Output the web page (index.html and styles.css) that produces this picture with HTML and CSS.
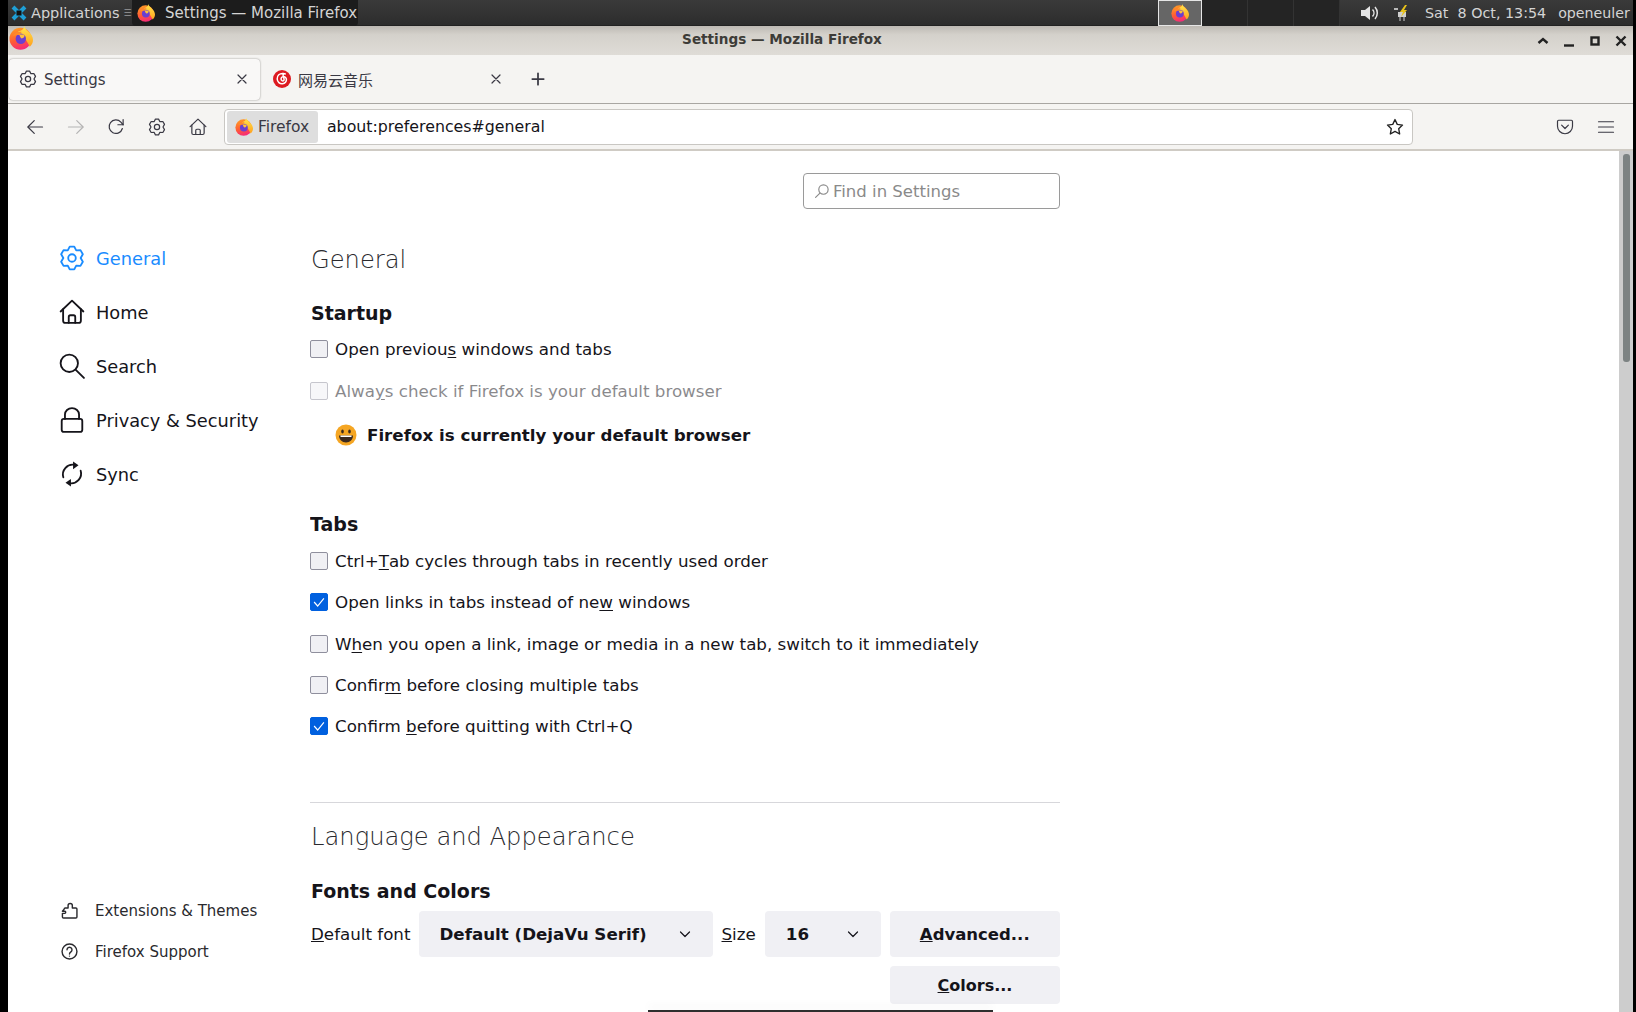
FILE: index.html
```html
<!DOCTYPE html>
<html>
<head>
	<meta charset="utf-8">
	<title>Settings</title>
	<link rel="stylesheet" href="styles.css">
</head>

<body>

	<svg class="sprite" width="0" height="0">
		<defs>
			<linearGradient id="fxbody" x1="0.3" y1="0" x2="0.6" y2="1">
				<stop offset="0" stop-color="#ff9a24"/>
				<stop offset="0.55" stop-color="#ff5a36"/>
				<stop offset="1" stop-color="#f5267f"/>
			</linearGradient>
			<linearGradient id="fxflame" x1="0.5" y1="0" x2="0.5" y2="1">
				<stop offset="0" stop-color="#ffe84d"/>
				<stop offset="1" stop-color="#ffa01e"/>
			</linearGradient>
		</defs>
		<symbol id="i-firefox" viewBox="0 0 24 24">
			<circle fill="url(#fxbody)" cx="11.500" cy="12.800" r="11"/>
			<path fill="url(#fxflame)" d="M15.500 0c-.2 2.200 1.500 3.600 3.800 5.500 3 2.500 4.700 5.500 4.700 8.500 0 2.600-1.200 5-3.200 6.700-.8-1.600-1.800-3.600-3.800-6.700L9 5.500c2.500-.5 5.800-1.800 6.500-5.500z"/>
			<circle fill="#6a3fd1" cx="11.800" cy="12.800" r="5.200"/>
			<path fill="#ff8a2a" d="M4 9.500c2-3.300 6-4.500 9-3.500-1.500.7-2.200 1.700-1.800 3H8c-1.500.6-2.600.9-4 .5z"/>
			<path fill="#ffc23a" d="M10.500 8.500h4.800c.8 2-.6 3.800-2.800 4-1-1-2-2.400-2-4z"/>
		</symbol>
		<symbol id="i-gear" viewBox="0 0 24 24">
			<path d="M9.900 1.500h4.200l1.800 3.400 3.900-.2 2.200 3.800-2 3.500 2 3.500-2.200 3.800-3.900-.2-1.800 3.400H9.900l-1.800-3.400-3.900.2L2 15.500 4 12 2 8.500l2.200-3.800 3.900.2z"/>
			<circle cx="12" cy="12" r="3.500"/>
		</symbol>
		<symbol id="i-home" viewBox="0 0 24 24">
			<path d="M1.500 11.500 12 1.500l10.500 10"/>
			<path d="M3.800 9.500v10.500a2 2 0 0 0 2 2h12.400a2 2 0 0 0 2-2V9.500"/>
			<path d="M9 22v-5.500a1.500 1.500 0 0 1 1.500-1.500h3a1.500 1.500 0 0 1 1.500 1.500V22"/>
		</symbol>
		<symbol id="i-search" viewBox="0 0 24 24">
			<circle cx="9.500" cy="9.500" r="8"/>
			<path d="M15.500 15.500 23 23"/>
		</symbol>
		<symbol id="i-lock" viewBox="0 0 24 24">
			<rect x="2.500" y="11" width="19" height="12" rx="2"/>
			<path d="M5.500 11V7a6.500 6 0 0 1 13 0v4"/>
		</symbol>
		<symbol id="i-sync" viewBox="0 0 24 24">
			<path d="M4 15a9 9 0 0 1 10-11.500"/>
			<path d="M20 9a9 9 0 0 1-10 11.500"/>
			<path class="solid" d="M13 .5l5 3.500-5 3.500z"/>
			<path class="solid" d="M11 16.500l-5 3.500 5 3.500z"/>
		</symbol>
		<symbol id="i-puzzle" viewBox="0 0 24 24">
			<path d="M2 13h3.500c1.500 0 1.500 3 0 3H2v5a1.500 1.500 0 0 0 1.500 1.500H21a1.500 1.500 0 0 0 1.500-1.500V10A1.500 1.500 0 0 0 21 8.500h-5V5c0-4-6-4-6 0v3.500H6A1.500 1.500 0 0 0 4.500 10z"/>
		</symbol>
		<symbol id="i-help" viewBox="0 0 24 24">
			<circle cx="12" cy="12" r="10.500"/>
			<path d="M8.500 9.500a3.500 3.500 0 1 1 5.500 3c-1.300.9-2 1.500-2 3"/>
			<circle class="solid" cx="12" cy="18.500" r="1"/>
		</symbol>
		<symbol id="i-back" viewBox="0 0 24 24">
			<path d="M22 12H3"/>
			<path d="M11 3.500 2.500 12l8.500 8.500"/>
		</symbol>
		<symbol id="i-forward" viewBox="0 0 24 24">
			<path d="M2 12h19"/>
			<path d="M13 3.500l8.500 8.500-8.500 8.500"/>
		</symbol>
		<symbol id="i-reload" viewBox="0 0 24 24">
			<path d="M20.500 14a9 9 0 1 1-2-8.500L21.500 9"/>
			<path d="M21.500 2v7h-7"/>
		</symbol>
		<symbol id="i-star" viewBox="0 0 24 24">
			<path d="M12 2l3 6.500 7 .9-5.100 4.900 1.300 7L12 17.900l-6.200 3.400 1.300-7L2 9.400l7-.9z"/>
		</symbol>
		<symbol id="i-pocket" viewBox="0 0 24 24">
			<path d="M3.500 3h17A1.500 1.500 0 0 1 22 4.500V11c0 5.500-4.500 10-10 10S2 16.500 2 11V4.500A1.500 1.500 0 0 1 3.500 3z"/>
			<path d="M7.500 9.500 12 14l4.500-4.500"/>
		</symbol>
		<symbol id="i-menu" viewBox="0 0 24 24">
			<path d="M2 5h20M2 12h20M2 19h20"/>
		</symbol>
		<symbol id="i-close" viewBox="0 0 12 12">
			<path d="M2 2l8 8M10 2l-8 8"/>
		</symbol>
		<symbol id="i-plus" viewBox="0 0 16 16">
			<path d="M8 1.500v13M1.500 8h13"/>
		</symbol>
		<symbol id="i-chevron" viewBox="0 0 12 12">
			<path d="M1.500 4 6 8.500 10.500 4"/>
		</symbol>
	</svg>

	<div class="screen">

		<div class="panel">
			<div class="panel-apps">
				<svg class="apps-logo" viewBox="0 0 16 16">
					<path d="M2 2l12 12M14 2 2 14"/>
					<rect x="5.500" y="5.500" width="5" height="5"/>
				</svg>
				<span>Applications</span>
				<span class="apps-sep">☰</span>
			</div>
			<div class="task-button">
				<svg class="fx-small"><use href="#i-firefox"/></svg>
				<span>Settings — Mozilla Firefox</span>
			</div>
			<div class="panel-fill"></div>
			<div class="pager">
				<div class="pager-cell pager-active"><svg class="fx-small"><use href="#i-firefox"/></svg></div>
				<div class="pager-cell pager-wide"></div>
				<div class="pager-cell"></div>
				<div class="pager-cell"></div>
			</div>
			<div class="panel-tray">
				<svg class="tray-sound" viewBox="0 0 20 18">
					<path class="tray-fill" d="M1 6h4l5-4v14l-5-4H1z"/>
					<path class="tray-line" d="M12.500 5.500a5 5 0 0 1 0 7M15 3a9 9 0 0 1 0 12"/>
				</svg>
				<svg class="tray-power" viewBox="0 0 18 18">
					<path fill="#cfcfcf" d="M5 8h8v5H5zM6.500 13h1v4h-1zM10.500 13h1v4h-1z"/>
					<path fill="#e8c21a" d="M12 1 7 8h3l-2 5 6-7h-3l3-5z"/>
					<path class="tray-line" d="M1 5h4"/>
				</svg>
				<span class="clock">Sat&nbsp; 8 Oct, 13:54</span>
				<span class="user">openeuler</span>
			</div>
		</div>

		<div class="titlebar">
			<svg class="title-icon"><use href="#i-firefox"/></svg>
			<div class="title-text">Settings — Mozilla Firefox</div>
			<div class="title-buttons">
				<svg class="win-btn" viewBox="0 0 12 12"><path d="M1.500 8 6 4l4.500 4"/></svg>
				<svg class="win-btn" viewBox="0 0 12 12"><path d="M1 10.500h10"/></svg>
				<svg class="win-btn" viewBox="0 0 12 12"><rect x="2.500" y="2.500" width="7" height="7"/></svg>
				<svg class="win-btn" viewBox="0 0 12 12"><path d="M1.500 1.500l9 9M10.500 1.500l-9 9"/></svg>
			</div>
		</div>

		<div class="tabbar">
			<div class="tab tab-active">
				<svg class="tab-icon icon"><use href="#i-gear"/></svg>
				<span class="tab-label">Settings</span>
				<svg class="tab-close icon"><use href="#i-close"/></svg>
			</div>
			<div class="tab">
				<svg class="tab-icon" viewBox="0 0 18 18">
					<circle cx="9" cy="9" r="9" fill="#dd1a21"/>
					<path fill="none" stroke="#fff" stroke-width="1.500" stroke-linecap="round" d="M10.500 3.500c-4-.5-6.500 2-6.300 5.500.2 3 2.500 5 5.300 4.700 2.500-.3 4.200-2.200 3.900-4.500-.3-2-2.500-3.200-4.100-2.300-1.500.8-1.700 3-.3 3.800 1.200.6 2.300-.3 2.100-1.500l-1-4c-.2-1 1-1.800 2.200-1.200"/>
				</svg>
				<span class="tab-label">网易云音乐</span>
				<svg class="tab-close icon"><use href="#i-close"/></svg>
			</div>
			<svg class="tab-plus icon"><use href="#i-plus"/></svg>
		</div>

		<div class="navbar">
			<svg class="nav-icon icon"><use href="#i-back"/></svg>
			<svg class="nav-icon icon nav-off"><use href="#i-forward"/></svg>
			<svg class="nav-icon icon"><use href="#i-reload"/></svg>
			<svg class="nav-icon icon"><use href="#i-gear"/></svg>
			<svg class="nav-icon icon"><use href="#i-home"/></svg>
			<div class="urlbar">
				<div class="url-chip">
					<svg class="fx-chip"><use href="#i-firefox"/></svg>
					<span>Firefox</span>
				</div>
				<div class="url-text">about:preferences#general</div>
				<svg class="url-star icon"><use href="#i-star"/></svg>
			</div>
			<div class="nav-right">
				<svg class="nav-icon icon"><use href="#i-pocket"/></svg>
				<svg class="nav-icon icon"><use href="#i-menu"/></svg>
			</div>
		</div>

		<div class="content">
			<div class="sidebar">
				<div class="side-top">
					<div class="side-item side-current"><svg class="side-icon icon"><use href="#i-gear"/></svg>General</div>
					<div class="side-item"><svg class="side-icon icon"><use href="#i-home"/></svg>Home</div>
					<div class="side-item"><svg class="side-icon icon"><use href="#i-search"/></svg>Search</div>
					<div class="side-item"><svg class="side-icon icon"><use href="#i-lock"/></svg>Privacy &amp; Security</div>
					<div class="side-item"><svg class="side-icon icon"><use href="#i-sync"/></svg>Sync</div>
				</div>
				<div class="side-bottom">
					<div class="side-link"><svg class="link-icon icon"><use href="#i-puzzle"/></svg>Extensions &amp; Themes</div>
					<div class="side-link"><svg class="link-icon icon"><use href="#i-help"/></svg>Firefox Support</div>
				</div>
			</div>

			<div class="main">
				<div class="find-row">
					<div class="find-box">
						<svg class="find-icon icon"><use href="#i-search"/></svg>
						<span>Find in Settings</span>
					</div>
				</div>

				<h1 class="page-title">General</h1>

				<h2 class="group-title">Startup</h2>
				<div class="checks checks-startup">
					<div class="check-row"><span class="box"></span>Open previou<u>s</u> windows and tabs</div>
					<div class="check-row check-disabled"><span class="box"></span>Alwa<u>y</u>s check if Firefox is your default browser</div>
				</div>
				<div class="default-note">
					<svg class="smile" viewBox="0 0 22 22">
						<circle cx="11" cy="11" r="10.500" fill="#f5a623"/>
						<ellipse cx="7.500" cy="7.500" rx="1.300" ry="2" fill="#3b2a20"/>
						<ellipse cx="14.500" cy="7.500" rx="1.300" ry="2" fill="#3b2a20"/>
						<path d="M4 11.500h14c0 4-3 7-7 7s-7-3-7-7z" fill="#3b2a20"/>
						<path d="M5.500 11.500h11v1.500h-11z" fill="#fff"/>
					</svg>
					<span>Firefox is currently your default browser</span>
				</div>

				<h2 class="group-title group-tabs">Tabs</h2>
				<div class="checks checks-tabs">
					<div class="check-row"><span class="box"></span>Ctrl+<u>T</u>ab cycles through tabs in recently used order</div>
					<div class="check-row"><span class="box box-on"><svg viewBox="0 0 18 18"><path d="M3.500 9l4 4.500 7-8.500"/></svg></span>Open links in tabs instead of ne<u>w</u> windows</div>
					<div class="check-row"><span class="box"></span>W<u>h</u>en you open a link, image or media in a new tab, switch to it immediately</div>
					<div class="check-row"><span class="box"></span>Confir<u>m</u> before closing multiple tabs</div>
					<div class="check-row"><span class="box box-on"><svg viewBox="0 0 18 18"><path d="M3.500 9l4 4.500 7-8.500"/></svg></span>Confirm <u>b</u>efore quitting with Ctrl+Q</div>
				</div>

				<hr class="divider">

				<h1 class="page-title title-lang">Language and Appearance</h1>

				<h2 class="group-title group-fonts">Fonts and Colors</h2>
				<div class="font-row">
					<span class="font-label"><u>D</u>efault font</span>
					<div class="select select-font">
						<span>Default (DejaVu Serif)</span>
						<svg class="chevron icon"><use href="#i-chevron"/></svg>
					</div>
					<span class="font-label"><u>S</u>ize</span>
					<div class="select select-size">
						<span>16</span>
						<svg class="chevron icon"><use href="#i-chevron"/></svg>
					</div>
					<div class="button button-tall"><u>A</u>dvanced...</div>
				</div>
				<div class="colors-row">
					<div class="button"><u>C</u>olors...</div>
				</div>
			</div>

			<div class="scrollbar"><div class="scroll-thumb"></div></div>
		</div>

		<div class="bottom-strip"></div>
	</div>

</body>
</html>
```

FILE: styles.css
```css
html, body {
	margin: 0;
	padding: 0;
}
body {
	font-family: "DejaVu Sans", "Noto Sans CJK SC", sans-serif;
	color: #15141a;
	background: #000;
}
.sprite {
	position: absolute;
}
.icon {
	fill: none;
	stroke: currentColor;
	stroke-width: 1.7;
	stroke-linecap: round;
	stroke-linejoin: round;
}
.icon .solid, .solid {
	fill: currentColor;
	stroke: none;
}

.screen {
	position: relative;
	box-sizing: border-box;
	width: 1636px;
	height: 1012px;
	border-left: 8px solid #000;
	border-right: 3px solid #000;
	display: flex;
	flex-direction: column;
	overflow: hidden;
	background: #fff;
}

/* desktop panel */
.panel {
	height: 26px;
	flex: none;
	display: flex;
	align-items: stretch;
	background: linear-gradient(to bottom, #3a3a3a, #2c2c2c);
	color: #d4d4d4;
	font-size: 15px;
	box-shadow: inset 0 -1px 0 #222;
}
.panel-apps {
	display: flex;
	align-items: center;
	width: 124px;
	flex: none;
	padding-left: 3px;
	box-sizing: border-box;
	font-size: 14.500px;
}
.apps-logo {
	width: 16px;
	height: 16px;
	margin-right: 4px;
	flex: none;
}
.apps-logo path {
	stroke: #1e9fd6;
	stroke-width: 4;
	fill: none;
}
.apps-logo rect {
	fill: #111;
}
.apps-sep {
	font-size: 9px;
	margin-left: 4px;
	color: #999;
}
.task-button {
	width: 226px;
	flex: none;
	display: flex;
	align-items: center;
	background: #1c1c1c;
	border-radius: 0 0 4px 4px;
	padding-left: 5px;
	box-sizing: border-box;
	white-space: nowrap;
}
.task-button span {
	margin-left: 10px;
}
.fx-small {
	width: 18px;
	height: 18px;
	flex: none;
}
.panel-fill {
	flex: 1;
}
.pager {
	display: flex;
	width: 182px;
	background: #242424;
	margin-right: 0;
}
.pager-cell {
	width: 46px;
	box-sizing: border-box;
	border-right: 1px solid #333;
	display: flex;
	align-items: center;
	justify-content: center;
}
.pager-active {
	width: 44px;
	height: 26px;
	background: #666;
	border: 1px solid #e6e6e6;
}
.pager-wide {
	width: 46px;
}
.panel-tray {
	display: flex;
	align-items: center;
	width: 293px;
	padding-left: 20px;
	box-sizing: border-box;
	white-space: nowrap;
}
.tray-sound {
	width: 20px;
	height: 18px;
	flex: none;
}
.tray-fill {
	fill: #e6e6e6;
}
.tray-line {
	fill: none;
	stroke: #e6e6e6;
	stroke-width: 1.500;
}
.tray-power {
	width: 18px;
	height: 18px;
	margin-left: 13px;
	flex: none;
}
.clock {
	margin-left: 14px;
	font-size: 14.300px;
}
.user {
	margin-left: 12px;
	font-size: 14.200px;
}

/* window title */
.titlebar {
	height: 29px;
	flex: none;
	position: relative;
	display: flex;
	align-items: center;
	background: linear-gradient(to bottom, #bdb9b3, #d4d1cb 30%, #dfdcd7);
}
.title-icon {
	position: absolute;
	left: 1px;
	top: 0;
	width: 24px;
	height: 24px;
}
.title-text {
	flex: 1;
	text-align: center;
	font-size: 13.600px;
	font-weight: bold;
	color: #3d3c38;
	margin: 0 0 3px 19px;
}
.title-buttons {
	display: flex;
	gap: 14px;
	padding-right: 6px;
	align-items: center;
}
.win-btn {
	width: 12px;
	height: 12px;
	fill: none;
	stroke: #222;
	stroke-width: 2.400;
}

/* tabs */
.tabbar {
	height: 49px;
	flex: none;
	box-sizing: border-box;
	display: flex;
	align-items: center;
	background: #f5f4f2;
	border-bottom: 1px solid #a8a6a2;
	padding-left: 1px;
	color: #3a3944;
}
.tab {
	width: 251px;
	height: 41px;
	flex: none;
	box-sizing: border-box;
	display: flex;
	align-items: center;
	padding: 0 12px 0 10px;
	margin-right: 3px;
	font-size: 15px;
}
.tab-active {
	background: #f9f8f7;
	border-radius: 4px;
	box-shadow: 0 0 2px #8c8a86;
}
.tab-active .tab-label {
	padding-top: 2px;
}
.tab-icon {
	width: 18px;
	height: 18px;
	flex: none;
	margin-right: 7px;
}
.tab-label {
	flex: 1;
}
.tab-close {
	width: 12px;
	height: 12px;
	flex: none;
	stroke-width: 1.200;
}
.tab-plus {
	width: 14px;
	height: 14px;
	margin-left: 14px;
	stroke-width: 2;
}

/* toolbar */
.navbar {
	height: 47px;
	flex: none;
	box-sizing: border-box;
	display: flex;
	align-items: center;
	background: #f5f4f2;
	border-bottom: 2px solid #cfcbc4;
	padding-left: 18px;
	color: #3a3944;
}
.nav-icon {
	width: 18px;
	height: 18px;
	margin-right: 22.700px;
	flex: none;
	stroke-width: 1.600;
}
.nav-off {
	color: #b4b3b3;
}
.urlbar {
	width: 1189px;
	height: 36px;
	flex: none;
	margin-left: -5.500px;
	box-sizing: border-box;
	display: flex;
	align-items: center;
	background: #fff;
	border: 1px solid #c9c7c3;
	border-radius: 4px;
	padding: 1px 8px 1px 2px;
}
.url-chip {
	width: 91px;
	height: 32px;
	display: flex;
	align-items: center;
	flex: none;
	box-sizing: border-box;
	padding-left: 8px;
	background: #dedede;
	border-radius: 3px;
	font-size: 15.500px;
}
.fx-chip {
	width: 18px;
	height: 18px;
	margin-right: 5px;
}
.url-text {
	flex: 1;
	margin-left: 9px;
	font-size: 15.800px;
	color: #15141a;
}
.url-star {
	width: 18px;
	height: 18px;
	stroke-width: 1.800;
	color: #222;
}
.nav-right {
	display: flex;
	margin-left: 143px;
}
.nav-right .nav-icon {
	margin-right: 23px;
}

/* page */
.content {
	flex: 1;
	display: flex;
	min-height: 0;
}
.sidebar {
	width: 302px;
	flex: none;
	display: flex;
	flex-direction: column;
	justify-content: space-between;
	padding: 80px 0 0 51px;
	box-sizing: border-box;
	height: 861px;
}
.side-item {
	height: 54px;
	display: flex;
	align-items: center;
	font-size: 17.800px;
	white-space: nowrap;
}
.side-current {
	color: #1a8cff;
}
.side-icon {
	width: 26px;
	height: 26px;
	margin-right: 11px;
	flex: none;
}
.side-bottom {
	padding-bottom: 40px;
}
.side-link {
	height: 41px;
	display: flex;
	align-items: center;
	font-size: 15px;
	color: #2a2a2e;
	white-space: nowrap;
}
.link-icon {
	width: 17px;
	height: 17px;
	margin: 0 17px 0 2px;
	flex: none;
	stroke-width: 2;
}

.main {
	width: 750px;
	flex: none;
	overflow: hidden;
}
.find-row {
	display: flex;
	justify-content: flex-end;
	margin-top: 22px;
}
.find-box {
	width: 257px;
	height: 36px;
	box-sizing: border-box;
	display: flex;
	align-items: center;
	border: 1px solid #9a9a9a;
	border-radius: 4px;
	padding-left: 11px;
	color: #8a8a8a;
	font-size: 16.500px;
}
.find-icon {
	width: 14px;
	height: 14px;
	margin-right: 4px;
	transform: scaleX(-1);
	stroke-width: 2;
}
.page-title {
	font-size: 24.200px;
	font-weight: 200;
	line-height: 30px;
	margin: 36px 0 0 1px;
	color: #2a2a2e;
}
.title-lang {
	margin-top: 19px;
}
.group-title {
	font-size: 19px;
	font-weight: bold;
	line-height: 26px;
	margin: 25px 0 0 1px;
}
.group-tabs {
	margin: 65px 0 0 0;
}
.group-fonts {
	margin-top: 26px;
}
.checks {
	display: flex;
	flex-direction: column;
}
.checks-startup {
	margin-top: 14px;
	gap: 24px;
}
.checks-tabs {
	margin-top: 15px;
	gap: 23.300px;
}
.check-row {
	height: 18px;
	line-height: 18px;
	display: flex;
	align-items: center;
	font-size: 16.700px;
	white-space: pre;
}
.check-row u {
	text-underline-offset: 2px;
}
.box {
	width: 18px;
	height: 18px;
	box-sizing: border-box;
	flex: none;
	margin-right: 7px;
	background: #f0f0f4;
	border: 1px solid #8f8f9d;
	border-radius: 2px;
}
.box-on {
	background: #0060df;
	border-color: #0060df;
}
.box-on svg {
	display: block;
	width: 16px;
	height: 16px;
	fill: none;
	stroke: #fff;
	stroke-width: 1.300;
}
.check-disabled {
	opacity: .5;
}
.default-note {
	display: flex;
	align-items: center;
	height: 22px;
	margin: 24px 0 0 25px;
	font-size: 16.700px;
	font-weight: bold;
}
.smile {
	width: 22px;
	height: 22px;
	margin-right: 10px;
}
.divider {
	border: none;
	border-top: 1px solid #d7d7db;
	margin: 67px 0 0 0;
}
.font-row {
	display: flex;
	align-items: center;
	margin: 7px 0 0 1px;
	font-size: 16.700px;
	height: 46px;
}
.font-label {
	white-space: nowrap;
}
.select {
	height: 46px;
	box-sizing: border-box;
	display: flex;
	align-items: center;
	justify-content: space-between;
	background: #f0f0f4;
	border-radius: 4px;
	font-weight: bold;
	padding: 0 22px 0 21px;
	white-space: nowrap;
	flex: none;
}
.select-font {
	width: 294px;
	margin: 0 9px 0 8px;
}
.select-size {
	width: 116px;
	margin: 0 9px 0 9px;
}
.chevron {
	width: 12px;
	height: 12px;
	stroke-width: 1.200;
}
.button {
	width: 170px;
	height: 38px;
	box-sizing: border-box;
	display: flex;
	align-items: center;
	justify-content: center;
	background: #f0f0f4;
	border-radius: 4px;
	font-weight: bold;
	font-size: 16px;
	white-space: pre;
}
.button-tall {
	height: 46px;
	font-size: 16.500px;
}
.colors-row {
	display: flex;
	justify-content: flex-end;
	margin-top: 9px;
}

.scrollbar {
	margin-left: auto;
	width: 14px;
	flex: none;
	background: #cdcdcd;
	padding: 3px 3px 0 4px;
	box-sizing: border-box;
}
.scroll-thumb {
	height: 208px;
	background: #7d8383;
	border-radius: 3px;
}

.bottom-strip {
	position: absolute;
	left: 640px;
	bottom: 0;
	width: 345px;
	height: 2px;
	background: #2e2e2e;
	box-shadow: 0 -4px 8px rgba(0, 0, 0, .08);
}
```
